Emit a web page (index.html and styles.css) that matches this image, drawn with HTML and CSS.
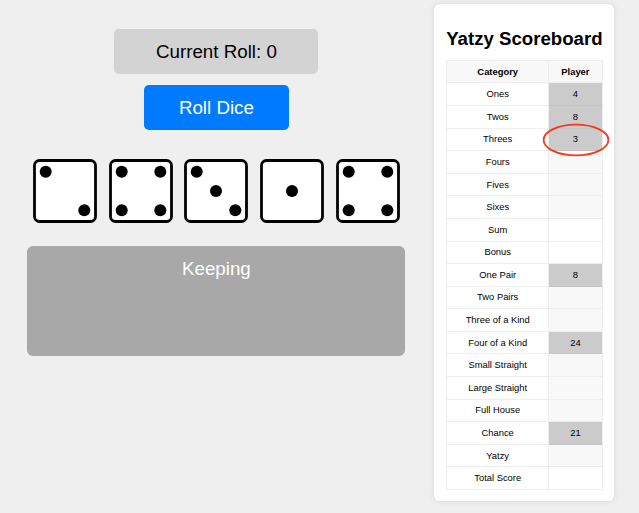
FILE: index.html
```html
<!DOCTYPE html>
<html lang="en">
<head>
<meta charset="utf-8">
<title>Yatzy</title>
<link rel="stylesheet" href="styles.css">
</head>
<body>
<main class="game">
  <section class="board">
    <div class="roll-count">Current Roll: 0</div>
    <button class="roll-button" type="button">Roll Dice</button>
    <div class="dice">
      <svg class="die" viewBox="0 0 64 64"><rect class="face" x="1.5" y="1.5" width="61" height="61" rx="5"/><circle cx="12.7" cy="12.7" r="6"/><circle cx="51.3" cy="51.3" r="6"/></svg>
      <svg class="die" viewBox="0 0 64 64"><rect class="face" x="1.5" y="1.5" width="61" height="61" rx="5"/><circle cx="12.7" cy="12.7" r="6"/><circle cx="51.3" cy="12.7" r="6"/><circle cx="12.7" cy="51.3" r="6"/><circle cx="51.3" cy="51.3" r="6"/></svg>
      <svg class="die" viewBox="0 0 64 64"><rect class="face" x="1.5" y="1.5" width="61" height="61" rx="5"/><circle cx="12.7" cy="12.7" r="6"/><circle cx="32" cy="32" r="6"/><circle cx="51.3" cy="51.3" r="6"/></svg>
      <svg class="die" viewBox="0 0 64 64"><rect class="face" x="1.5" y="1.5" width="61" height="61" rx="5"/><circle cx="32" cy="32" r="6"/></svg>
      <svg class="die" viewBox="0 0 64 64"><rect class="face" x="1.5" y="1.5" width="61" height="61" rx="5"/><circle cx="12.7" cy="12.7" r="6"/><circle cx="51.3" cy="12.7" r="6"/><circle cx="12.7" cy="51.3" r="6"/><circle cx="51.3" cy="51.3" r="6"/></svg>
    </div>
    <div class="keeping">Keeping</div>
  </section>
  <aside class="scoreboard">
    <h1 class="title">Yatzy Scoreboard</h1>
    <div class="table">
      <div class="cell head">Category</div><div class="cell head">Player</div>
      <div class="cell">Ones</div><div class="cell scored">4</div>
      <div class="cell">Twos</div><div class="cell scored">8</div>
      <div class="cell">Threes</div><div class="cell scored marked">3<svg class="ring" viewBox="0 0 68 34"><ellipse cx="34" cy="17" rx="32.4" ry="15.4"/></svg></div>
      <div class="cell">Fours</div><div class="cell open"></div>
      <div class="cell">Fives</div><div class="cell open"></div>
      <div class="cell">Sixes</div><div class="cell open"></div>
      <div class="cell">Sum</div><div class="cell"></div>
      <div class="cell">Bonus</div><div class="cell"></div>
      <div class="cell">One Pair</div><div class="cell scored">8</div>
      <div class="cell">Two Pairs</div><div class="cell open"></div>
      <div class="cell">Three of a Kind</div><div class="cell open"></div>
      <div class="cell">Four of a Kind</div><div class="cell scored">24</div>
      <div class="cell">Small Straight</div><div class="cell open"></div>
      <div class="cell">Large Straight</div><div class="cell open"></div>
      <div class="cell">Full House</div><div class="cell open"></div>
      <div class="cell">Chance</div><div class="cell scored">21</div>
      <div class="cell">Yatzy</div><div class="cell open"></div>
      <div class="cell">Total Score</div><div class="cell"></div>
    </div>
  </aside>
</main>
</body>
</html>
```
FILE: styles.css
```css
* { box-sizing: border-box; }
body {
  margin: 0;
  height: 513px;
  overflow: hidden;
  background: #efefef;
  color: #000;
  font-family: "Liberation Sans", Arial, sans-serif;
}
.game {
  display: flex;
  align-items: flex-start;
  gap: 29px;
  padding: 4px 0 0 27.4px;
}
.board {
  display: flex;
  flex-direction: column;
  align-items: center;
  width: 378px;
  padding-top: 25px;
  font-size: 18.75px;
}
.roll-count {
  width: 204px;
  height: 44.5px;
  line-height: 45px;
  text-align: center;
  background: #d3d3d3;
  border-radius: 5px;
}
.roll-button {
  width: 145px;
  height: 44.5px;
  margin-top: 11.5px;
  padding: 1px 0 0;
  border: 0;
  border-radius: 5px;
  background: #007bff;
  color: #fff;
  font: inherit;
}
.dice {
  display: flex;
  gap: 11.7px;
  margin-top: 29px;
}
.die {
  display: block;
  width: 64px;
  height: 64px;
  fill: #000;
}
.face {
  fill: #fff;
  stroke: #000;
  stroke-width: 2.8;
}
.keeping {
  width: 378px;
  height: 110.3px;
  margin-top: 23.2px;
  padding-top: 12px;
  line-height: 21px;
  text-align: center;
  border-radius: 6px;
  background: #a8a8a8;
  color: #fff;
}
.scoreboard {
  width: 180px;
  height: 497px;
  padding: 22.6px 11.8px 0;
  border-radius: 6px;
  background: #fff;
  box-shadow: 0 0 6px rgba(0, 0, 0, .1);
}
.title {
  margin: 0 0 10.3px;
  font-size: 18.65px;
  line-height: 23px;
  text-align: center;
  white-space: nowrap;
}
.table {
  display: grid;
  grid-template-columns: 102px 1fr;
  grid-auto-rows: 22.58px;
  border: solid #eee;
  border-width: 1px 0 0 1px;
  font-size: 9.38px;
}
.cell {
  display: flex;
  align-items: center;
  justify-content: center;
  border: solid #eee;
  border-width: 0 1px 1px 0;
}
.head { background: #f8f8f8; font-weight: bold; }
.open { background: #f8f8f8; }
.scored { background: #cbcbcb; border-bottom-color: #c5c5c5; }
.marked { position: relative; }
.ring {
  position: absolute;
  left: -7.3px;
  top: -5.6px;
  width: 68px;
  height: 34px;
  fill: none;
  stroke: #f5391d;
  stroke-width: 1.8;
}
```
